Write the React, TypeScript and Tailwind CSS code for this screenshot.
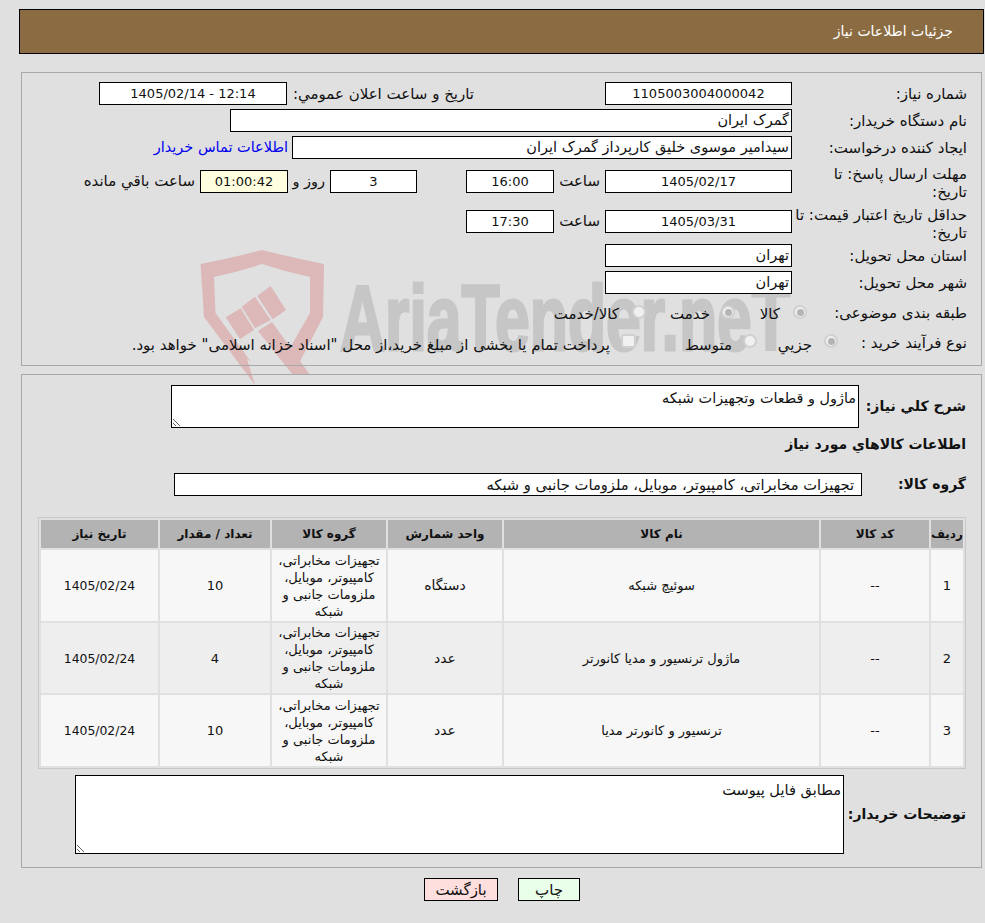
import React from "react";

const box = "h-[23px] border border-black bg-white px-[2px] text-[14.5px] text-[#111] outline-none";
const lab = "text-[15px] leading-[18px] text-[#111]";

function Label({ children, cls = "" }: { children: React.ReactNode; cls?: string }) {
  return <div className={`w-[175px] shrink-0 ${lab} ${cls}`}>{children}</div>;
}

function Field({ w, v, center = false, cls = "", ltr = false }: { w: string; v: string; center?: boolean; cls?: string; ltr?: boolean }) {
  return (
    <div dir={ltr ? "ltr" : undefined} className={`${box} ${w} ${center ? "text-center !text-[13px]" : "text-right"} leading-[21px] shrink-0 ${cls}`}>{v}</div>
  );
}

function Radio({ on = false, cls = "" }: { on?: boolean; cls?: string }) {
  return (
    <span className={`flex h-[14px] w-[14px] shrink-0 items-center justify-center rounded-full border-2 border-[#d0d0d0] bg-[#f0f0f0] ${cls}`}>
      {on && <span className="h-[7px] w-[7px] rounded-full bg-[#b4b4b4]" />}
    </span>
  );
}

const group = "تجهیزات مخابراتی، کامپیوتر، موبایل، ملزومات جانبی و شبکه";
const rows = [
  { n: "1", name: "سوئیچ شبکه", unit: "دستگاه", qty: "10" },
  { n: "2", name: "ماژول ترنسیور و مدیا کانورتر", unit: "عدد", qty: "4" },
  { n: "3", name: "ترنسیور و کانورتر مدیا", unit: "عدد", qty: "10" },
];

function Watermark() {
  return (
    <svg dir="ltr" className="absolute left-0 top-0" width="985" height="420" viewBox="0 0 985 420" aria-hidden="true">
      <path
        fill="#dcb8b8"
        fillRule="evenodd"
        d="M200.5 264 Q232 258 262 250 Q294 258 324 264 L323 317 L293 375 L277 350 L287 353 L310 313 L310 277 Q286 272 262 264 Q238 272 214 277 L215.5 313 L251 362 L247 359 L255 385 L204 317 Z"
      />
      <path fill="#dcb8b8" d="M225.7 317.3 L240.7 308.3 L254 330 L240 339 Z" />
      <path fill="#dcb8b8" d="M241.7 306.7 L255 296.7 L270.7 320 L255 328.3 Z" />
      <path fill="#dcb8b8" d="M257.3 296 L270.7 286 L286 310 L272.7 319.3 Z" />
      <path fill="#dcb8b8" d="M258 331 L272 322 L310 375 L293 375 Z" />
      <text
        x="340"
        y="350"
        direction="ltr"
        fill="#c6c6c6"
        stroke="#c6c6c6"
        strokeWidth="3"
        fontSize="92"
        fontFamily="'Liberation Sans', sans-serif"
        fontWeight="700"
        textLength="450"
        lengthAdjust="spacingAndGlyphs"
      >
        AriaTender.neT
      </text>
    </svg>
  );
}

export default function App() {
  return (
    <div dir="rtl" className="relative min-h-[923px] overflow-hidden bg-[#e0e0e0] font-['DejaVu_Sans',sans-serif] text-[#111]">
      <Watermark />
      <div className="relative flex flex-col">
        <div className="ml-[19px] mr-[1px] mt-[9px] flex h-[45px] items-center border border-black bg-[#8b6c42] pr-[30px] text-[14px] text-white">
          جزئیات اطلاعات نیاز
        </div>

        <section className="ml-[21px] mr-[3px] mt-[18px] h-[294px] border border-[#a8a8a8] pr-[14px] pt-[9px]">
          <div className="flex h-[27px] items-start">
            <Label cls="mt-[3px]">شماره نیاز:</Label>
            <Field w="w-[187px]" v="1105003004000042" center />
            <div className={`mr-[131px] mt-[3px] w-[187px] shrink-0 whitespace-nowrap ${lab}`}>تاريخ و ساعت اعلان عمومي:</div>
            <Field w="w-[188px]" v="1405/02/14 - 12:14" center ltr />
          </div>
          <div className="flex h-[27px] items-start">
            <Label cls="mt-[3px]">نام دستگاه خريدار:</Label>
            <Field w="w-[562px]" v="گمرک ایران" />
          </div>
          <div className="flex h-[34px] items-start">
            <Label cls="mt-[3px]">ایجاد کننده درخواست:</Label>
            <Field w="w-[500px]" v="سیدامیر موسوی خلیق کارپرداز گمرک ایران" />
            <a className="mr-[4px] mt-[2px] whitespace-nowrap text-[14.5px] leading-[18px] text-[#0000ee]">اطلاعات تماس خريدار</a>
          </div>
          <div className="flex h-[40px] items-start">
            <Label cls="-mt-[5px]">مهلت ارسال پاسخ: تا<br />تاریخ:</Label>
            <Field w="w-[187px]" v="1405/02/17" center />
            <div className={`w-[51px] shrink-0 pr-[5px] pt-[2px] ${lab}`}>ساعت</div>
            <Field w="w-[88px]" v="16:00" center />
            <div className="w-[49px] shrink-0" />
            <Field w="w-[87px]" v="3" center />
            <div className={`w-[42px] shrink-0 whitespace-nowrap pr-[5px] pt-[2px] text-[14.5px] leading-[18px]`}>روز و</div>
            <Field w="w-[88px]" v="01:00:42" center cls="!bg-[#ffffe0]" />
            <div className={`shrink-0 whitespace-nowrap pr-[5px] pt-[2px] ${lab}`}>ساعت باقي مانده</div>
          </div>
          <div className="flex h-[34px] items-start">
            <Label cls="-mt-[4px]">حداقل تاریخ اعتبار قیمت: تا<br />تاریخ:</Label>
            <Field w="w-[187px]" v="1405/03/31" center />
            <div className={`w-[51px] shrink-0 pr-[5px] pt-[2px] ${lab}`}>ساعت</div>
            <Field w="w-[88px]" v="17:30" center />
          </div>
          <div className="flex h-[27px] items-start">
            <Label cls="mt-[3px]">استان محل تحویل:</Label>
            <Field w="w-[187px]" v="تهران" />
          </div>
          <div className="flex h-[32px] items-start">
            <Label cls="mt-[3px]">شهر محل تحویل:</Label>
            <Field w="w-[187px]" v="تهران" />
          </div>
          <div className="flex h-[30px] items-start">
            <div className={`mt-[1px] w-[160px] shrink-0 whitespace-nowrap ${lab}`}>طبقه بندی موضوعی:</div>
            <Radio on cls="mt-[2px]" />
            <span className={`mr-[13px] mt-[2px] w-[45px] ${lab}`}>کالا</span>
            <Radio on cls="mt-[2px]" />
            <span className={`mr-[11px] mt-[2px] w-[64px] ${lab}`}>خدمت</span>
            <Radio cls="mt-[2px]" />
            <span className={`mr-[13px] mt-[2px] ${lab}`}>کالا/خدمت</span>
          </div>
          <div className="flex items-start">
            <div className={`mt-[1px] w-[129px] shrink-0 whitespace-nowrap ${lab}`}>نوع فرآیند خرید :</div>
            <Radio on cls="mt-[1px]" />
            <span className={`mr-[12px] mt-[3px] w-[55px] ${lab}`}>جزيي</span>
            <Radio cls="mt-[1px]" />
            <span className={`mr-[11px] mt-[3px] w-[96px] ${lab}`}>متوسط</span>
            <span className="mt-[1px] h-[14px] w-[15px] shrink-0 rounded-[3px] border-2 border-[#d0d0d0] bg-[#f0f0f0]" />
            <span className={`mr-[11px] mt-[3px] whitespace-nowrap ${lab}`}>
              پرداخت تمام یا بخشی از مبلغ خرید،از محل "اسناد خزانه اسلامی" خواهد بود.
            </span>
          </div>
        </section>

        <section className="ml-[21px] mr-[3px] mt-[8px] h-[494px] border border-[#a8a8a8] pr-[15px] pt-[10px]">
          <div className="flex items-center">
            <div className="w-[107px] shrink-0 whitespace-nowrap text-[14px] font-bold">شرح کلي نیاز:</div>
            <textarea
              readOnly
              dir="rtl"
              defaultValue="ماژول و قطعات وتجهیزات شبکه"
              className="h-[43px] w-[688px] resize border border-black bg-white px-[2px] pt-[3px] text-[14.4px] leading-[18px] outline-none"
            />
          </div>
          <div className="mt-[7px] text-[14px] font-bold leading-[18px]">اطلاعات کالاهاي مورد نیاز</div>
          <div className="mt-[20px] flex items-center">
            <div className="w-[104px] shrink-0 whitespace-nowrap text-[14px] font-bold">گروه کالا:</div>
            <div className="h-[23px] w-[688px] border border-black bg-white pr-[7px] text-[14.7px] leading-[21px]">{group}</div>
          </div>

          <table className="mt-[21px] w-[928px] table-fixed border-separate border-spacing-[2px] border border-[#c8c8c8] text-center text-[13px] leading-[17px]">
            <colgroup>
              <col className="w-[32px]" />
              <col className="w-[108px]" />
              <col className="w-[315px]" />
              <col className="w-[114px]" />
              <col className="w-[114px]" />
              <col className="w-[110px]" />
              <col className="w-[117px]" />
            </colgroup>
            <thead>
              <tr className="h-[28px] bg-[#b3b3b3] text-[12px] font-bold">
                <th className="p-0">رديف</th>
                <th className="p-0">کد کالا</th>
                <th className="p-0">نام کالا</th>
                <th className="p-0">واحد شمارش</th>
                <th className="p-0">گروه کالا</th>
                <th className="p-0">تعداد / مقدار</th>
                <th className="p-0">تاریخ نیاز</th>
              </tr>
            </thead>
            <tbody>
              {rows.map((r, i) => (
                <tr key={r.n} className={i % 2 === 0 ? "h-[71px] bg-[#f7f7f7]" : "h-[70px] bg-[#eeeeee]"}>
                  <td className="p-0">{r.n}</td>
                  <td className="p-0">--</td>
                  <td className="p-0">{r.name}</td>
                  <td className="p-0 text-[14px]">{r.unit}</td>
                  <td className="px-[4px] py-0">{group}</td>
                  <td className="p-0">{r.qty}</td>
                  <td className="p-0 text-[12.4px]">1405/02/24</td>
                </tr>
              ))}
            </tbody>
          </table>

          <div className="mt-[6px] flex items-center">
            <div className="w-[122px] shrink-0 whitespace-nowrap text-[14px] font-bold">توضیحات خریدار:</div>
            <textarea
              readOnly
              dir="rtl"
              defaultValue="مطابق فایل پیوست"
              className="h-[79px] w-[769px] resize border border-black bg-white px-[2px] pt-[5px] text-[14.6px] leading-[18px] outline-none"
            />
          </div>
        </section>

        <div className="mt-[10px] flex justify-center gap-[20px] pl-[19px]" dir="ltr">
          <button className="h-[23px] w-[74px] border border-black bg-[#ffdede] text-[15px]">بازگشت</button>
          <button className="h-[23px] w-[62px] border border-black bg-[#eaffea] text-[15px]">چاپ</button>
        </div>
      </div>
    </div>
  );
}
